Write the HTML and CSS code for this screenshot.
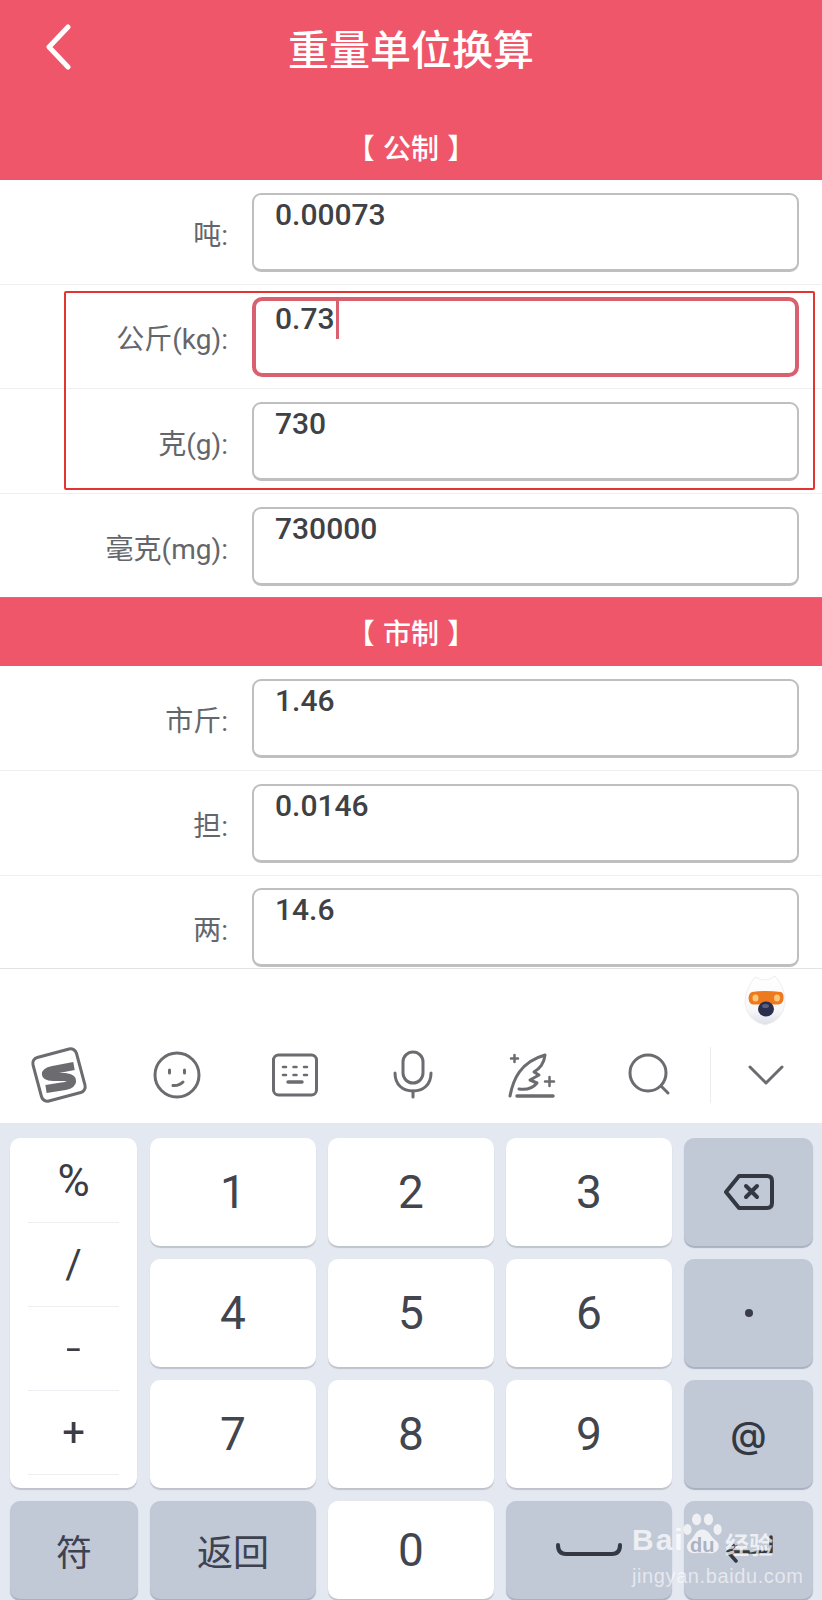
FILE: index.html
```html
<!DOCTYPE html>
<html lang="zh-CN">
<head>
<meta charset="utf-8">
<title>重量单位换算</title>
<link rel="stylesheet" href="styles.css">
</head>
<body>
<div class="app">
  <header class="head">
    <div class="topbar">
      <svg class="back" viewBox="0 0 30 46" width="30" height="46"><path d="M25 3 L6 23 L25 43"/></svg>
      <h1 class="title">重量单位换算</h1>
    </div>
    <div class="group-title group-title-first">【 公制 】</div>
  </header>

  <section class="rows">
    <div class="row"><span class="label">吨:</span><div class="field">0.00073</div></div>
    <div class="row row-s"><span class="label">公斤(kg):</span><div class="field field-on">0.73<i class="caret"></i></div></div>
    <div class="row"><span class="label">克(g):</span><div class="field">730</div></div>
    <div class="row row-end"><span class="label">毫克(mg):</span><div class="field">730000</div></div>
  </section>

  <div class="group-title group-bar">【 市制 】</div>

  <section class="rows">
    <div class="row"><span class="label">市斤:</span><div class="field">1.46</div></div>
    <div class="row"><span class="label">担:</span><div class="field">0.0146</div></div>
    <div class="row row-last"><span class="label">两:</span><div class="field">14.6</div></div>
  </section>

  <div class="mascot-strip">
    <svg class="mascot" viewBox="0 0 60 60" width="60" height="60">
      <defs>
        <linearGradient id="egg" x1="0" y1="0" x2="0" y2="1">
          <stop offset="0" stop-color="#ffffff"/><stop offset=".7" stop-color="#f7f7f9"/><stop offset="1" stop-color="#dde0e8"/>
        </linearGradient>
      </defs>
      <path d="M20 7 L27 10 Q30 9 33 10 L40 6 Q51 19 50 33 Q48 51 30 55 Q12 51 10 33 Q10 19 20 7Z" fill="url(#egg)" stroke="#eceef2" stroke-width="1"/>
      <path d="M17 22 Q30 20 46 22 Q49 23 48.500 29 Q48 34 43 34.500 L18 34.500 Q14 34 13.500 28 Q14 23 17 22Z" fill="#ee7a1f"/>
      <ellipse cx="20.500" cy="28" rx="3" ry="3.500" fill="#fcc777"/>
      <ellipse cx="42" cy="28" rx="3" ry="3.500" fill="#fcc777"/>
      <ellipse cx="31" cy="39" rx="8" ry="7.500" fill="#2a2f4d"/>
      <ellipse cx="30.500" cy="36" rx="3.500" ry="2" fill="#5a607e"/>
    </svg>
  </div>

  <nav class="tools">
    <svg class="tool" viewBox="0 0 60 60" width="60" height="60">
      <rect x="7.500" y="7.500" width="45" height="45" rx="6" transform="rotate(-15 30 30)"/>
      <path class="s-mark" d="M45 21 L24 25 C14 27 15 32 24 32 L36 32 C46 33 45 39 36 41 L17 44"/>
    </svg>
    <svg class="tool" viewBox="0 0 60 60" width="60" height="60">
      <circle cx="30" cy="30" r="22"/>
      <path d="M22.500 25 v3 M37.500 25 v3"/>
      <path d="M26 40.500 Q32 41 36 37"/>
    </svg>
    <svg class="tool" viewBox="0 0 60 60" width="60" height="60">
      <rect x="8.500" y="10" width="43" height="40" rx="5"/>
      <path class="thin" d="M18 22 h3 M28.500 22 h3 M39 22 h3 M18 30 h3 M28.500 30 h3 M39 30 h3"/>
      <path class="bold" d="M23 37 h14"/>
    </svg>
    <svg class="tool" viewBox="0 0 60 60" width="60" height="60">
      <rect x="20" y="7" width="20" height="31" rx="10"/>
      <path d="M12 28 C12 40 20 46 30 46 C40 46 48 40 48 28"/>
      <path d="M30 46 V52"/>
    </svg>
    <svg class="tool" viewBox="6 0 70 70" width="70" height="70">
      <path d="M20 56 C23 40 30 22 55 15 C54 24 50 28 44 32 L49 35 L40 40 L47 43 C43 48 36 50 29 49"/>
      <path class="bold" d="M27 56 H63"/>
      <path class="thin" d="M24.500 15 v7 M21 18.500 h7 M59.500 37 v9 M55 41.500 h9"/>
    </svg>
    <svg class="tool" viewBox="0 0 60 60" width="60" height="60">
      <circle cx="29" cy="28" r="18"/>
      <path d="M42 41 L49 48"/>
    </svg>
    <span class="tool-div"></span>
    <svg class="tool tool-down" viewBox="0 0 40 24" width="40" height="24"><path d="M4 4 L20 20 L36 4"/></svg>
  </nav>

  <div class="keyboard">
    <div class="sym-panel">
      <div class="sym sym-pct">%</div>
      <div class="sym">/</div>
      <div class="sym sym-dash">-</div>
      <div class="sym">+</div>
    </div>
    <div class="key">1</div>
    <div class="key">2</div>
    <div class="key">3</div>
    <div class="key key-g">
      <svg class="kicon" viewBox="0 0 50 36" width="50" height="36"><path d="M15 2 H43 Q48 2 48 7 V29 Q48 34 43 34 H15 L2 18 Z"/><path d="M22 12 L33 23 M33 12 L22 23"/></svg>
    </div>
    <div class="key">4</div>
    <div class="key">5</div>
    <div class="key">6</div>
    <div class="key key-g"><span class="dot"></span></div>
    <div class="key">7</div>
    <div class="key">8</div>
    <div class="key">9</div>
    <div class="key key-g key-at">@</div>
    <div class="key key-g key-cjk">符</div>
    <div class="key key-g key-cjk">返回</div>
    <div class="key">0</div>
    <div class="key key-g">
      <svg class="kicon kicon-space" viewBox="0 0 66 14" width="66" height="14"><path d="M2 2 Q2 11 10 11 H56 Q64 11 64 2"/></svg>
    </div>
    <div class="key key-g">
      <svg class="kicon kicon-enter" viewBox="0 0 50 30" width="50" height="30"><path d="M47 2 V17 H4 M12 9 L4 17 L12 26"/></svg>
    </div>
  </div>

  <div class="mark-box"></div>

  <div class="watermark">
    <div class="wm-top">
      <span class="wm-bai">Bai</span>
      <span class="wm-du">
        <svg class="paw" viewBox="0 0 46 46" width="42" height="44">
          <ellipse cx="6" cy="18" rx="4.500" ry="6"/>
          <ellipse cx="16" cy="7" rx="5" ry="6.500"/>
          <ellipse cx="29" cy="7" rx="5" ry="6.500"/>
          <ellipse cx="39" cy="18" rx="4.500" ry="6"/>
          <path d="M22 18 C30 18 31 26 37 30 C44 36 39 45 30 44 C26 43.500 19 43.500 15 44 C6 45 2 36 9 30 C14 26 15 18 22 18Z"/>
        </svg>
        <span class="wm-dutext">du</span>
      </span>
      <span class="wm-jy">经验</span>
    </div>
    <div class="wm-url">jingyan.baidu.com</div>
  </div>
</div>
</body>
</html>
```
FILE: styles.css
```css
* { box-sizing: border-box; }
html, body { margin: 0; padding: 0; background: #fff; }
body { font-family: Roboto, "Noto Sans CJK SC", sans-serif; color: #37393d; }
.app { position: relative; width: 822px; height: 1600px; overflow: hidden; background: #fff; }

.head { height: 180px; background: #f05669; }
.topbar { height: 93px; display: flex; align-items: center; justify-content: center; position: relative; }
.back { position: absolute; left: 43px; top: 24px; fill: none; stroke: #fff; stroke-width: 5; stroke-linecap: round; stroke-linejoin: round; }
.title { margin: 0; font: 500 41px/48px "Noto Sans CJK SC", sans-serif; color: #fff; }
.group-title { color: #fff; font: 500 28px/36px "Noto Sans CJK SC", sans-serif; text-align: center; word-spacing: 2px; }
.group-title-first { height: 87px; padding-top: 36px; }
.group-bar { height: 69px; background: #f05669; padding-top: 17px; box-shadow: inset 0 1px 0 #dd6a78; }

.row { height: 105px; padding: 13px 23px 0 0; display: flex; border-bottom: 1px solid #efefef; }
.row-s { height: 104px; padding-top: 12px; }
.row-end { height: 103px; border-bottom: 0; }
.row-last { height: 93px; padding-top: 12px; border-bottom: 1px solid #e2e2e2; }
.label { width: 252px; padding: 25px 24px 0 0; text-align: right; font: 400 28px/36px Roboto, "Noto Sans CJK SC", sans-serif; color: #63666b; }
.field { flex: 1; height: 79px; border: 2px solid #bfbfbf; border-bottom-width: 3px; border-radius: 9px; padding: 1px 0 0 21px; font: 500 30px/38px Roboto, "Noto Sans CJK SC", sans-serif; color: #3f4145; background: #fff; }
.field-on { height: 80px; border: 4px solid #d9606f; padding: 0 0 0 19px; line-height: 36px; border-radius: 10px; }
.caret { display: inline-block; width: 3px; height: 38px; background: #d9606f; vertical-align: top; margin-left: 1px; }

.mascot-strip { height: 70px; display: flex; justify-content: flex-end; padding: 1px 27px 0 0; }
.mascot { display: block; }

.tools { height: 84px; padding-bottom: 12px; display: grid; grid-template-columns: repeat(6, 118px) 5px 1fr; align-items: center; justify-items: center; }
.tool { fill: none; stroke: #6c6c70; stroke-width: 3; stroke-linecap: round; stroke-linejoin: round; }
.tool .s-mark { stroke-width: 8; stroke-linecap: butt; }
.tool .thin { stroke-width: 2.500; }
.tool .bold { stroke-width: 3.500; }
.tool-div { width: 1px; height: 56px; background: #ececec; }
.tool-down { margin-right: 3px; }

.keyboard { height: 477px; padding: 15px 0 0 10px; background: #e4e8f1; display: grid; grid-template-columns: 128px 166px 166px 166px 129px; grid-template-rows: 108px 108px 108px 98px; gap: 13px 12px; }
.sym-panel { grid-row: 1 / span 3; margin-right: 1px; background: #fff; border-radius: 10px; padding-top: 1px; box-shadow: 0 2px 1px #bfc3cc; }
.sym { height: 84px; margin: 0 18px; display: flex; align-items: center; justify-content: center; border-bottom: 1px solid #eceef1; font: 400 40px/1 Roboto, sans-serif; color: #3a3d45; }
.sym-pct { font-size: 44px; }
.sym-dash { font-size: 54px; font-weight: 300; }
.key { display: flex; align-items: center; justify-content: center; background: #fff; border-radius: 10px; font: 400 46px/1 Roboto, "Noto Sans CJK SC", sans-serif; color: #42454d; box-shadow: 0 2px 1px #bfc3cc; }
.key-g { background: #c1c8d6; box-shadow: 0 2px 1px #a9b0bf; }
.key-cjk { font: 400 36px/1 "Noto Sans CJK SC", sans-serif; color: #3d4250; }
.key-at { font: 500 37px/1 Inter, sans-serif; color: #343842; }
.dot { width: 8px; height: 8px; border-radius: 50%; background: #3a3d48; }
.kicon { fill: none; stroke: #343842; stroke-width: 4; stroke-linecap: round; stroke-linejoin: round; }
.kicon-enter { stroke-width: 3.500; }

.mark-box { position: absolute; left: 64px; top: 291px; width: 751px; height: 199px; border: 2px solid #e3342f; border-radius: 2px; pointer-events: none; }

.watermark { position: absolute; left: 632px; top: 1512px; width: 150px; color: rgba(255,255,255,.72); }
.wm-top { display: flex; align-items: flex-end; height: 46px; }
.wm-bai { width: 50px; padding-bottom: 3px; font: 700 30px/30px "Liberation Sans", sans-serif; letter-spacing: 2px; }
.wm-du { position: relative; display: block; width: 43px; height: 46px; }
.paw { display: block; fill: rgba(255,255,255,.72); }
.wm-dutext { position: absolute; left: 8px; top: 23px; font: 700 20px/20px "Liberation Sans", sans-serif; color: #aab2c3; }
.wm-jy { font: 700 24px/28px "Noto Sans CJK SC", sans-serif; white-space: nowrap; }
.wm-url { margin-top: 6px; font: 400 20px/24px "Liberation Sans", sans-serif; letter-spacing: .6px; white-space: nowrap; color: rgba(255,255,255,.6); }
```
